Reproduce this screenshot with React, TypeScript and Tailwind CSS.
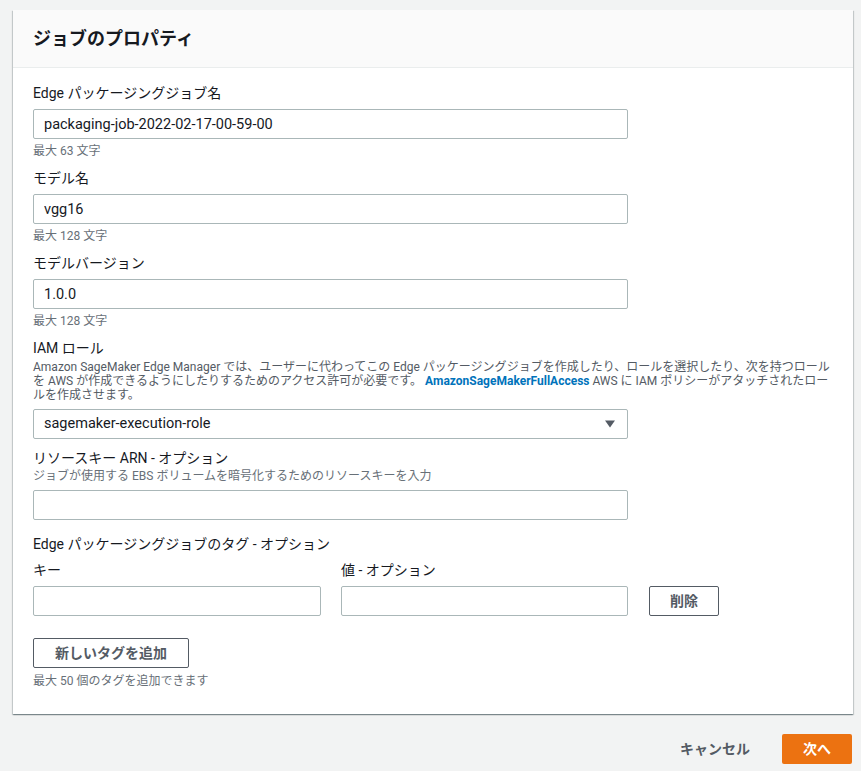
const font = { fontFamily: 'Roboto, "Noto Sans CJK JP", sans-serif' };

const Label = (props: { children: React.ReactNode }) => (
  <div className="text-[14px] leading-[19px] text-[#16191f]">{props.children}</div>
);

const Hint = (props: { children: React.ReactNode; className?: string }) => (
  <div className={"text-[12px] leading-[15px] text-[#687078] " + (props.className || "")}>
    {props.children}
  </div>
);

const TextInput = (props: { value?: string; className?: string }) => (
  <input
    readOnly
    value={props.value || ""}
    className={
      "block h-[30px] border border-[#aab7b8] rounded-[2px] px-[10px] text-[14.5px] text-[#16191f] bg-white outline-none " +
      (props.className || "w-[595px]")
    }
    style={font}
  />
);

const Field = (props: { label: string; value: string; hint: string }) => (
  <div className="flex flex-col">
    <Label>{props.label}</Label>
    <div className="mt-[6px]">
      <TextInput value={props.value} />
    </div>
    <Hint className="mt-[5px]">{props.hint}</Hint>
  </div>
);

export default function App() {
  return (
    <div className="min-h-[771px] bg-[#f2f3f3] pl-[13px] pr-[8px] pt-[10px]" style={font}>
      <div className="bg-white shadow-[0_1px_1px_0_rgba(0,28,36,0.3),1px_1px_1px_0_rgba(0,28,36,0.15),-1px_1px_1px_0_rgba(0,28,36,0.15)]">
        <div className="h-[58px] bg-[#fafafa] border-b border-[#eaeded] px-[20px] flex items-center">
          <h2 className="text-[18px] font-bold text-[#16191f] leading-[22px]">ジョブのプロパティ</h2>
        </div>
        <div className="px-[20px] pt-[16px] pb-[25px] flex flex-col">
          <Field label="Edge パッケージングジョブ名" value="packaging-job-2022-02-17-00-59-00" hint="最大 63 文字" />
          <div className="mt-[10px]">
            <Field label="モデル名" value="vgg16" hint="最大 128 文字" />
          </div>
          <div className="mt-[10px]">
            <Field label="モデルバージョン" value="1.0.0" hint="最大 128 文字" />
          </div>

          <div className="mt-[10px] flex flex-col">
            <Label>IAM ロール</Label>
            <div className="mt-[2px] text-[12px] leading-[14px] text-[#545b64] w-[800px]">
              Amazon SageMaker Edge Manager では、ユーザーに代わってこの Edge パッケージングジョブを作成したり、ロールを選択したり、次を持つロールを AWS が作成できるようにしたりするためのアクセス許可が必要です。{" "}
              <span className="font-bold text-[#0073bb]">AmazonSageMakerFullAccess</span> AWS に IAM ポリシーがアタッチされたロールを作成させます。
            </div>
            <div className="mt-[7px] w-[595px] h-[30px] border border-[#aab7b8] rounded-[2px] px-[10px] flex items-center justify-between bg-white">
              <span className="text-[14.5px] text-[#16191f]">sagemaker-execution-role</span>
              <svg width="12" height="10" viewBox="0 0 12 10" className="mr-[1px]">
                <path d="M1 1.5h10L6 8.5z" fill="#545b64" />
              </svg>
            </div>
          </div>

          <div className="mt-[10px] flex flex-col">
            <Label>リソースキー ARN - オプション</Label>
            <Hint className="mt-[1px] leading-[13px]">ジョブが使用する EBS ボリュームを暗号化するためのリソースキーを入力</Hint>
            <div className="mt-[6px]">
              <TextInput />
            </div>
          </div>

          <div className="mt-[15px]">
            <Label>Edge パッケージングジョブのタグ - オプション</Label>
          </div>
          <div className="mt-[7px] flex items-end gap-[20px]">
            <div className="flex flex-col">
              <Label>キー</Label>
              <div className="mt-[6px]">
                <TextInput className="w-[288px]" />
              </div>
            </div>
            <div className="flex flex-col">
              <Label>値 - オプション</Label>
              <div className="mt-[6px]">
                <TextInput className="w-[287px]" />
              </div>
            </div>
            <button className="ml-[1px] h-[30px] w-[70px] border border-[#545b64] rounded-[2px] bg-white text-[14px] font-bold text-[#545b64]">
              削除
            </button>
          </div>
          <div className="mt-[22px]">
            <button className="block h-[30px] w-[156px] border border-[#545b64] rounded-[2px] bg-white text-[14px] font-bold text-[#545b64]">
              新しいタグを追加
            </button>
          </div>
          <Hint className="mt-[6px]">最大 50 個のタグを追加できます</Hint>
        </div>
      </div>
      <div className="mt-[20px] flex justify-end items-center gap-[12px] pr-[1px]">
        <button className="h-[30px] px-[20px] text-[14px] font-bold text-[#545b64]">キャンセル</button>
        <button className="h-[30px] w-[70px] bg-[#ec7211] rounded-[2px] text-[14px] font-bold text-white">次へ</button>
      </div>
    </div>
  );
}
